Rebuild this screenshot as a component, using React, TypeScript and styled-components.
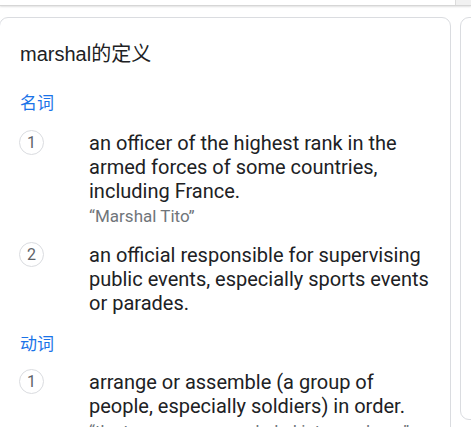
import React from "react";
import styled, { createGlobalStyle } from "styled-components";

const Global = createGlobalStyle`
  html, body { margin: 0; padding: 0; background: #fff; overflow: hidden; }
  body { font-family: Roboto, "Noto Sans CJK SC", sans-serif; color: #202124; }
`;

const Page = styled.div`
  width: 471px;
  height: 427px;
  overflow: hidden;
  display: flex;
  flex-direction: column;
`;

const TopBar = styled.div`
  flex: none;
  display: flex;
  height: 5px;
  border-bottom: 1px solid #d6d6d6;
  box-shadow: 0 1px 2px rgba(0, 0, 0, 0.12);
`;

const TopMain = styled.div`
  flex: 1;
  background: #fff;
`;

const TopSide = styled.div`
  width: 15px;
  background: #f1f1f1;
  border-left: 1px solid #dcdcdc;
`;

const Cards = styled.div`
  flex: none;
  display: flex;
  gap: 9px;
  margin-top: 11px;
  margin-left: -1px;
  align-items: flex-start;
`;

const Card = styled.div<{ $w: number; $h: number }>`
  flex: none;
  width: ${(p) => p.$w}px;
  height: ${(p) => p.$h}px;
  box-sizing: border-box;
  border: 1px solid #dadce0;
  border-radius: 9px;
  background: #fff;
  padding: 24px 0 0 20px;
`;

const Title = styled.div`
  font-family: "Liberation Sans", Arial, "Noto Sans CJK SC", sans-serif;
  font-size: 20px;
  line-height: 24px;
  color: #202124;
`;

const Pos = styled.div<{ $mt: number }>`
  margin-top: ${(p) => p.$mt}px;
  font-family: "Noto Sans CJK SC", sans-serif;
  font-size: 17px;
  line-height: 24px;
  color: #1a73e8;
`;

const Row = styled.div<{ $mt: number }>`
  display: grid;
  grid-template-columns: 69px 1fr;
  margin-top: ${(p) => p.$mt}px;
  padding-right: 16px;
`;

const Num = styled.div`
  width: 25px;
  height: 25px;
  box-sizing: border-box;
  border: 1px solid #dadce0;
  border-radius: 50%;
  display: flex;
  align-items: center;
  justify-content: center;
  font-family: Roboto, sans-serif;
  font-size: 16px;
  color: #5f6368;
  margin-top: -1px;
  margin-left: -1px;
`;

const Def = styled.div`
  font-family: Roboto, sans-serif;
  font-size: 20px;
  line-height: 24px;
  color: #202124;
`;

const Example = styled.div`
  margin-top: 2px;
  font-family: Roboto, sans-serif;
  font-size: 17px;
  line-height: 22px;
  color: #70757a;
`;

export default function App() {
  return (
    <>
      <Global />
      <Page>
        <TopBar>
          <TopMain />
          <TopSide />
        </TopBar>
        <Cards>
          <Card $w={452} $h={440}>
            <Title>marshal的定义</Title>
            <Pos $mt={24}>名词</Pos>
            <Row $mt={17}>
              <Num>1</Num>
              <div>
                <Def>
                  an officer of the highest rank in the armed forces of some
                  countries, including France.
                </Def>
                <Example>“Marshal Tito”</Example>
              </div>
            </Row>
            <Row $mt={16}>
              <Num>2</Num>
              <Def>
                an official responsible for supervising public events,
                especially sports events or parades.
              </Def>
            </Row>
            <Pos $mt={16}>动词</Pos>
            <Row $mt={15}>
              <Num>1</Num>
              <div>
                <Def>
                  arrange or assemble (a group of people, especially soldiers)
                  in order.
                </Def>
                <Example>“the troops were marshaled into a column”</Example>
              </div>
            </Row>
          </Card>
          <Card $w={300} $h={403} />
        </Cards>
      </Page>
    </>
  );
}
